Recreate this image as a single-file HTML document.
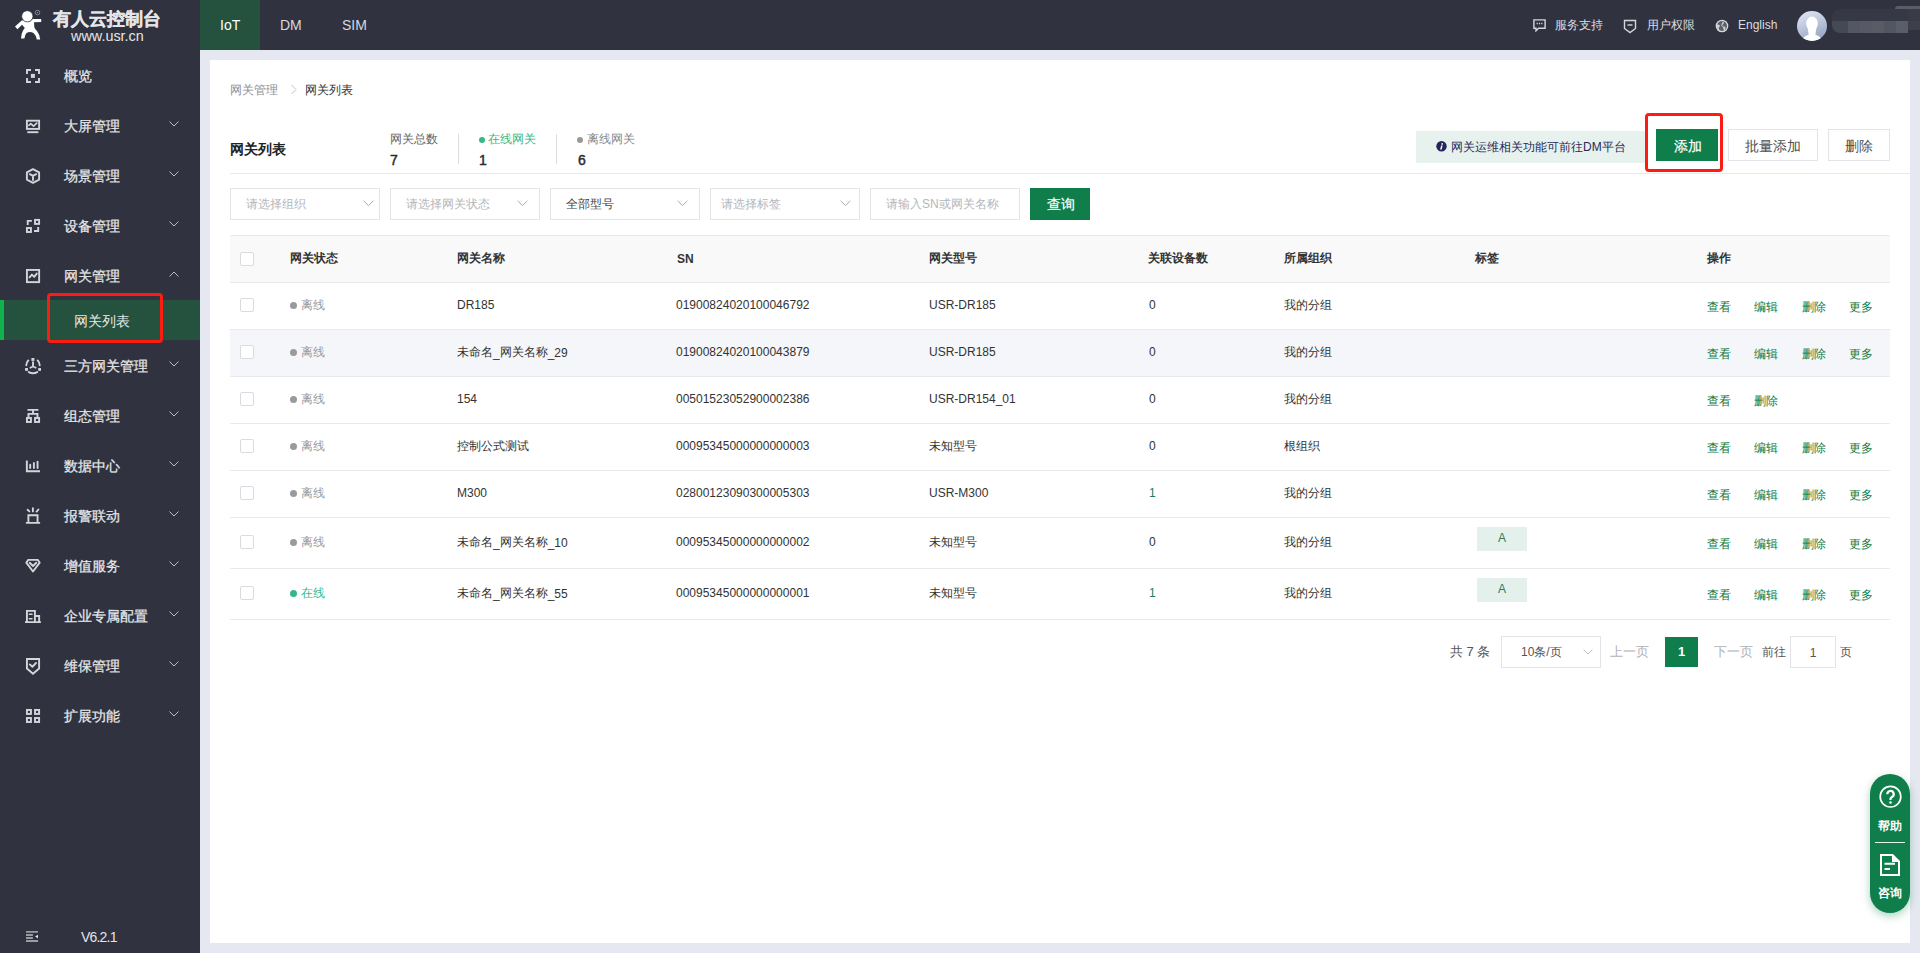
<!DOCTYPE html>
<html><head><meta charset="utf-8">
<style>
*{margin:0;padding:0;box-sizing:border-box}
html,body{width:1920px;height:953px;overflow:hidden;font-family:"Liberation Sans",sans-serif;background:#e5e8f0;color:#333}
.abs{position:absolute}
#top{position:absolute;left:0;top:0;width:1920px;height:50px;background:#30333f;z-index:2}
#side{position:absolute;left:0;top:0;width:200px;height:953px;background:#30333f}
#card{position:absolute;left:210px;top:60px;width:1700px;height:883px;background:#fff}
.logo-t{position:absolute;left:53px;top:7px;font-size:18px;font-weight:bold;color:#e4e5e8;letter-spacing:0;-webkit-text-stroke:0.3px #e4e5e8}
.logo-u{position:absolute;left:71px;top:28px;font-size:14.4px;color:#e6e6e6}
.tab{position:absolute;top:0;height:50px;line-height:50px;font-size:14px;color:#d7d9de}
.mi{position:absolute;left:0;width:200px;height:50px;font-size:14px;color:#e6e7ea;-webkit-text-stroke:0.25px #e6e7ea}
.mi .t{position:absolute;left:64px;top:1px;line-height:50px}
.mi svg.ic{position:absolute;left:24px;top:15px}
.mi .ch{position:absolute;left:169px;top:21px}
.th{font-size:12px;font-weight:bold;color:#333}
.td{font-size:12px;color:#333;white-space:nowrap}
.op{font-size:12px;color:#0c7a42}
.cj{position:relative;top:-1px}
.dot{display:inline-block;width:7px;height:7px;border-radius:50%;vertical-align:1px;margin-right:4px}
.tag{width:50px;height:24px;background:#e4f0eb;color:#2e7d5a;font-size:12px;line-height:23px;text-align:center}
</style></head><body>
<div id="top">
  <svg class="abs" style="left:10px;top:5px" width="40" height="40" viewBox="0 0 40 40"><path fill="#fff" d="M12 15.2 L16 16.8 L20 16.8 L22.8 14 L31.2 14 L31.2 17 L24 17.3 L24.3 22 Q25 24.5 27 26 Q29.8 29.5 30.2 34.6 L26.8 34.6 Q26 30 23.5 28 Q20 25.8 16.5 28 Q15 29.5 14.4 33.5 L11 33.5 Q11.5 28 13 25.5 L14.8 23 L12 19.8 L7.4 24.3 L5 21.5 Z"/><circle cx="17.3" cy="11.3" r="5.6" fill="#fff" stroke="#30333f" stroke-width="0.7"/><circle cx="27.5" cy="7.6" r="2.3" fill="none" stroke="#9a9ca3" stroke-width="0.8"/><circle cx="27.5" cy="7.6" r="0.7" fill="#9a9ca3"/></svg>
  <div class="logo-t">有人云控制台</div>
  <div class="logo-u">www.usr.cn</div>
  <div class="abs" style="left:200px;top:0;width:60px;height:50px;background:#24523e"></div>
  <div class="tab" style="left:220px;color:#fff">IoT</div>
  <div class="tab" style="left:280px">DM</div>
  <div class="tab" style="left:342px">SIM</div>
  <svg class="abs" style="left:1533px;top:19px" width="13" height="13" viewBox="0 0 13 13" fill="none" stroke="#d6d7db" stroke-width="1.4"><path d="M.9 .9h11.2v8.3H5.6L3 11.8V9.2H.9z"/><path d="M3.6 4.6h1.2M5.9 4.6h1.2M8.2 4.6h1.2" stroke-width="1.5"/></svg>
  <div class="abs" style="left:1555px;top:17px;font-size:12px;color:#dcdde0">服务支持</div>
  <svg class="abs" style="left:1623px;top:19px" width="14" height="15" viewBox="0 0 14 15" fill="none" stroke="#d6d7db" stroke-width="1.4"><path d="M1.5 1.5h11v8L7 13.6 1.5 9.5z"/><path d="M4.5 6h5"/></svg>
  <div class="abs" style="left:1647px;top:17px;font-size:12px;color:#dcdde0">用户权限</div>
  <svg class="abs" style="left:1715px;top:19px" width="14" height="14" viewBox="0 0 14 14"><circle cx="7" cy="7" r="6.3" fill="#d6d7db"/><circle cx="7" cy="7" r="5" fill="#5d606b"/><path fill="#d6d7db" d="M2.2 5.5c.8-.3 1.8 0 2.4.7.5.7.2 1.5-.4 1.9-.6.4-.6 1.2-.2 1.8l.6 1.6C3.3 11 2 9.3 2 7.2c0-.6.1-1.2.2-1.7zM7.8 2c.7.5 1.1 1.2 1 2-.1.7-.8 1.1-1.2 1.6-.5.6-.3 1.4.3 1.7.7.3 1.5.1 2.1.6.6.5.6 1.3.3 2l-.8 1.4C8.8 11 8.3 10 8.4 9c.1-.8-.6-1.2-1.2-1.6C6.4 6.9 6.2 6 6.6 5.2 7 4.3 7.9 3.4 7.8 2z"/></svg>
  <div class="abs" style="left:1738px;top:18px;font-size:12px;color:#dcdde0">English</div>
  <svg class="abs" style="left:1797px;top:11px" width="31" height="31" viewBox="0 0 31 31"><defs><linearGradient id="av" x1="0.3" y1="0" x2="0.7" y2="1"><stop offset="0" stop-color="#dde3f2"/><stop offset="1" stop-color="#95a1c2"/></linearGradient><clipPath id="avc"><circle cx="15" cy="15" r="15"/></clipPath></defs><circle cx="15" cy="15" r="15" fill="url(#av)"/><g clip-path="url(#avc)" fill="#fff"><ellipse cx="15" cy="12.5" rx="5.8" ry="7"/><path d="M10.5 16h9l-1.2 8h-6.6z"/><ellipse cx="15" cy="29" rx="9.2" ry="5.8"/></g></svg>
  <div class="abs" style="left:1832px;top:9px;width:88px;height:24px;border-radius:8px 0 0 8px;overflow:hidden;filter:blur(0.6px)"><div class="abs" style="left:0;top:0;width:88px;height:12px;background:#363945"></div><div class="abs" style="left:0;top:12px;width:16px;height:12px;background:#454855"></div><div class="abs" style="left:16px;top:12px;width:12px;height:12px;background:#545763"></div><div class="abs" style="left:28px;top:12px;width:12px;height:12px;background:#575a66"></div><div class="abs" style="left:40px;top:12px;width:12px;height:12px;background:#5b5b66"></div><div class="abs" style="left:52px;top:12px;width:12px;height:12px;background:#535662"></div><div class="abs" style="left:64px;top:12px;width:12px;height:12px;background:#5a5d6a"></div><div class="abs" style="left:76px;top:12px;width:12px;height:9px;background:#3d404b"></div><div class="abs" style="left:76px;top:0;width:12px;height:12px;background:#393c47"></div></div>
  <div class="abs" style="left:1895px;top:6px;width:25px;height:3px;background:#5a5d68;border-radius:3px 0 0 0;filter:blur(0.5px)"></div>

</div>
<div id="side">
<div class="mi" style="top:50px"><svg class="ic" width="20" height="20" viewBox="0 0 20 20" fill="none" stroke="#d3d5db" stroke-width="1.9"><path d="M7 5H3V9M11 5H15V9M3 13V17H7M15 13V17H11"/><rect x="6.9" y="8.9" width="4" height="4" fill="#d3d5db" stroke="none"/></svg><span class="t">概览</span></div>
<div class="mi" style="top:100px"><svg class="ic" width="20" height="20" viewBox="0 0 20 20" fill="none" stroke="#d3d5db" stroke-width="1.9"><rect x="2.9" y="5.7" width="12.2" height="8.2"/><path d="M4.9 10.4L6.8 8.6 9.5 11.2 12.8 8.1" stroke-width="1.6" stroke-linecap="round" stroke-linejoin="round"/><path d="M3.3 17.2H14.4"/></svg><span class="t">大屏管理</span><svg class="ch" width="10" height="6" viewBox="0 0 10 6" fill="none" stroke="#b9bcc6" stroke-width="1"><path d="M.5 .5L5 5 9.5 .5"/></svg></div>
<div class="mi" style="top:150px"><svg class="ic" width="20" height="20" viewBox="0 0 20 20" fill="none" stroke="#d3d5db" stroke-width="1.9"><path d="M9 4.1L15.1 7.4V14.6L9 17.9 2.9 14.6V7.4z" stroke-linejoin="round"/><path d="M5.8 9.2L9 10.8 12.2 9.2M9 10.8V15" stroke-linecap="round" stroke-linejoin="round"/></svg><span class="t">场景管理</span><svg class="ch" width="10" height="6" viewBox="0 0 10 6" fill="none" stroke="#b9bcc6" stroke-width="1"><path d="M.5 .5L5 5 9.5 .5"/></svg></div>
<div class="mi" style="top:200px"><svg class="ic" width="20" height="20" viewBox="0 0 20 20" fill="none" stroke="#d3d5db" stroke-width="1.9"><path d="M7.9 5.85H3.73V10M14.2 12V16.05H10"/><rect x="11" y="4.9" width="4.1" height="4"/><rect x="2.93" y="13" width="4" height="4"/></svg><span class="t">设备管理</span><svg class="ch" width="10" height="6" viewBox="0 0 10 6" fill="none" stroke="#b9bcc6" stroke-width="1"><path d="M.5 .5L5 5 9.5 .5"/></svg></div>
<div class="mi" style="top:250px"><svg class="ic" width="20" height="20" viewBox="0 0 20 20" fill="none" stroke="#d3d5db" stroke-width="1.9"><rect x="2.93" y="4.93" width="12.2" height="12.2"/><path d="M5.5 12.3L7.9 9.6 10.2 11.9 12.7 8.6" stroke-linecap="round" stroke-linejoin="round"/></svg><span class="t">网关管理</span><svg class="ch" width="10" height="6" viewBox="0 0 10 6" fill="none" stroke="#b9bcc6" stroke-width="1"><path d="M.5 5.5L5 1 9.5 5.5"/></svg></div>
<div class="mi" style="top:340px"><svg class="ic" width="20" height="20" viewBox="0 0 20 20" fill="none" stroke="#d3d5db" stroke-width="1.9"><rect x="7.4" y="3" width="3" height="2.9" fill="#d3d5db" stroke="none"/><path d="M9 6.6V11.5M9 11.5L5.7 13M9 11.5L12.3 13"/><path d="M4.3 5.4A7.3 7.3 0 0 0 2.3 10.3M13.7 5.4A7.3 7.3 0 0 1 15.7 10.3M4.8 17.1Q9 19.3 13.2 17.1" stroke-linecap="round"/><rect x="1.1" y="13" width="2.8" height="2.9" fill="#d3d5db" stroke="none"/><rect x="14.2" y="13" width="2.8" height="2.9" fill="#d3d5db" stroke="none"/></svg><span class="t">三方网关管理</span><svg class="ch" width="10" height="6" viewBox="0 0 10 6" fill="none" stroke="#b9bcc6" stroke-width="1"><path d="M.5 .5L5 5 9.5 .5"/></svg></div>
<div class="mi" style="top:390px"><svg class="ic" width="20" height="20" viewBox="0 0 20 20" fill="none" stroke="#d3d5db" stroke-width="1.9"><path d="M3.5 4.85H14.4M9 5.8V8.9M4.45 12V8.9H13.45V12"/><rect x="2.93" y="13" width="4" height="4"/><rect x="11" y="13" width="4.1" height="4"/></svg><span class="t">组态管理</span><svg class="ch" width="10" height="6" viewBox="0 0 10 6" fill="none" stroke="#b9bcc6" stroke-width="1"><path d="M.5 .5L5 5 9.5 .5"/></svg></div>
<div class="mi" style="top:440px"><svg class="ic" width="20" height="20" viewBox="0 0 20 20" fill="none" stroke="#d3d5db" stroke-width="1.9"><path d="M2.85 5.5V16.25H16"/><path d="M6.2 9.7V13M9.9 8V13M13.55 6.6V13" stroke-linecap="round"/></svg><span class="t">数据中心</span><svg class="ch" width="10" height="6" viewBox="0 0 10 6" fill="none" stroke="#b9bcc6" stroke-width="1"><path d="M.5 .5L5 5 9.5 .5"/></svg></div>
<div class="mi" style="top:490px"><svg class="ic" width="20" height="20" viewBox="0 0 20 20" fill="none" stroke="#d3d5db" stroke-width="1.9"><path d="M4.4 17.9V10.2H13.55V17.9M1.9 17.9H16.1"/><path d="M3.6 4.8L5.3 6.4M8.9 3.2V6.4M14.4 4.5L12.6 6.6" stroke-linecap="round"/></svg><span class="t">报警联动</span><svg class="ch" width="10" height="6" viewBox="0 0 10 6" fill="none" stroke="#b9bcc6" stroke-width="1"><path d="M.5 .5L5 5 9.5 .5"/></svg></div>
<div class="mi" style="top:540px"><svg class="ic" width="20" height="20" viewBox="0 0 20 20" fill="none" stroke="#d3d5db" stroke-width="1.9"><path d="M4.1 4.9H13.9L15.7 7.7 9 16.5 2.3 7.7z" stroke-linejoin="round"/><path d="M5.7 7.8L9 11 12.3 7.8" stroke-linecap="round" stroke-linejoin="round"/></svg><span class="t">增值服务</span><svg class="ch" width="10" height="6" viewBox="0 0 10 6" fill="none" stroke="#b9bcc6" stroke-width="1"><path d="M.5 .5L5 5 9.5 .5"/></svg></div>
<div class="mi" style="top:590px"><svg class="ic" width="20" height="20" viewBox="0 0 20 20" fill="none" stroke="#d3d5db" stroke-width="1.9"><path d="M2.93 17V5.85H10.9V17M10.9 10.95H15.15V17M1 17.1H16.9"/><path d="M5.4 9.2H8M5.4 13.7H8" stroke-width="1.5" stroke-linecap="round"/></svg><span class="t">企业专属配置</span><svg class="ch" width="10" height="6" viewBox="0 0 10 6" fill="none" stroke="#b9bcc6" stroke-width="1"><path d="M.5 .5L5 5 9.5 .5"/></svg></div>
<div class="mi" style="top:640px"><svg class="ic" width="20" height="20" viewBox="0 0 20 20" fill="none" stroke="#d3d5db" stroke-width="1.9"><path d="M2.93 4H15.1V13.6L9 18.7 2.93 13.6z"/><path d="M5.8 9.4L8.4 11.8 12 8" stroke-linecap="round" stroke-linejoin="round"/></svg><span class="t">维保管理</span><svg class="ch" width="10" height="6" viewBox="0 0 10 6" fill="none" stroke="#b9bcc6" stroke-width="1"><path d="M.5 .5L5 5 9.5 .5"/></svg></div>
<div class="mi" style="top:690px"><svg class="ic" width="20" height="20" viewBox="0 0 20 20" fill="none" stroke="#d3d5db" stroke-width="1.9"><rect x="2.93" y="4.93" width="4" height="4"/><rect x="11" y="4.93" width="4.1" height="4"/><rect x="2.93" y="13" width="4" height="4"/><rect x="11" y="13" width="4.1" height="4"/></svg><span class="t">扩展功能</span><svg class="ch" width="10" height="6" viewBox="0 0 10 6" fill="none" stroke="#b9bcc6" stroke-width="1"><path d="M.5 .5L5 5 9.5 .5"/></svg></div>
<div class="abs" style="left:0;top:300px;width:200px;height:40px;background:#24523e"></div>
<div class="abs" style="left:0;top:300px;width:4px;height:40px;background:#12b24f"></div>
<div class="abs" style="left:74px;top:301px;line-height:40px;font-size:14px;color:#e8e9eb">网关列表</div>
<div class="abs" style="left:47px;top:293px;width:116px;height:50px;border:3px solid #fc1d12;border-radius:4px"></div>
<svg class="abs" style="left:20px;top:925px" width="24" height="22" viewBox="0 0 24 22"><path d="M6 6.9H18M6 10H12.9M6 13H12.9M6 16H18" stroke="#9a9ca3" stroke-width="1.8"/><path d="M18 9.7V13.2L15 11.5z" fill="#e2e2e4"/></svg>
<div class="abs" style="left:81px;top:929px;font-size:14px;letter-spacing:-0.8px;color:#e4e5e9">V6.2.1</div>
</div>
<div id="card">
</div>
<div class="abs" style="left:230px;top:82px;font-size:12px;color:#8c8f96">网关管理</div>
<svg class="abs" style="left:290px;top:84px" width="8" height="11" viewBox="0 0 8 11" fill="none" stroke="#c3c5ca" stroke-width="1"><path d="M1.5 1l4.5 4.5L1.5 10"/></svg>
<div class="abs" style="left:305px;top:82px;font-size:12px;color:#333">网关列表</div>

<div class="abs" style="left:230px;top:141px;font-size:14px;font-weight:700;color:#222">网关列表</div>
<div class="abs" style="left:390px;top:131px;font-size:12px;color:#666">网关总数</div>
<div class="abs" style="left:390px;top:152px;font-size:14px;font-weight:normal;-webkit-text-stroke:0.45px #2a2a2a;color:#2a2a2a">7</div>
<div class="abs" style="left:458px;top:134px;width:1px;height:30px;background:#dcdde2"></div>
<div class="abs" style="left:479px;top:131px;font-size:12px;color:#35b885"><span style="display:inline-block;width:6px;height:6px;border-radius:50%;background:#35b885;vertical-align:0px;margin-right:3px"></span>在线网关</div>
<div class="abs" style="left:479px;top:152px;font-size:14px;font-weight:normal;-webkit-text-stroke:0.45px #2a2a2a;color:#2a2a2a">1</div>
<div class="abs" style="left:556px;top:134px;width:1px;height:30px;background:#dcdde2"></div>
<div class="abs" style="left:577px;top:131px;font-size:12px;color:#888"><span style="display:inline-block;width:6px;height:6px;border-radius:50%;background:#999;vertical-align:0px;margin-right:4px"></span>离线网关</div>
<div class="abs" style="left:578px;top:152px;font-size:14px;font-weight:normal;-webkit-text-stroke:0.45px #2a2a2a;color:#2a2a2a">6</div>

<div class="abs" style="left:1416px;top:131px;width:230px;height:32px;background:#e7f1ee"></div>
<svg class="abs" style="left:1436px;top:141px" width="11" height="11" viewBox="0 0 11 11"><circle cx="5.5" cy="5.3" r="5.2" fill="#23265a"/><path d="M5.1 4.4h1.5L5.6 8.6H4.1z" fill="#fff"/><circle cx="6.2" cy="2.9" r=".85" fill="#fff"/></svg>
<div class="abs" style="left:1451px;top:139px;font-size:12px;color:#272a55">网关运维相关功能可前往DM平台</div>
<div class="abs" style="left:1656px;top:129px;width:62px;height:32px;background:#0f7e4b;color:#fff;font-size:14px;line-height:35px;text-align:center;padding-left:1px;-webkit-text-stroke:0.2px #fff">添加</div>
<div class="abs" style="left:1645px;top:113px;width:78px;height:59px;border:3px solid #fc1d12;border-radius:4px"></div>
<div class="abs" style="left:1728px;top:129px;width:90px;height:32px;border:1px solid #e2e4ea;color:#505050;font-size:14px;line-height:33px;text-align:center">批量添加</div>
<div class="abs" style="left:1828px;top:129px;width:62px;height:32px;border:1px solid #e2e4ea;color:#505050;font-size:14px;line-height:33px;text-align:center">删除</div>
<div class="abs" style="left:230px;top:173px;width:1680px;height:1px;background:#e8eaef"></div>
<div class="abs" style="left:230px;top:188px;width:150px;height:32px;border:1px solid #e2e4ea;font-size:12px;line-height:30px;padding-left:15px;color:#b4b6bb">请选择组织</div><svg class="abs" style="left:363px;top:200px" width="11" height="7" viewBox="0 0 11 7" fill="none" stroke="#a6a8ae" stroke-width="1"><path d="M.6 .8L5.5 5.6 10.4 .8"/></svg><div class="abs" style="left:390px;top:188px;width:150px;height:32px;border:1px solid #e2e4ea;font-size:12px;line-height:30px;padding-left:15px;color:#b4b6bb">请选择网关状态</div><svg class="abs" style="left:517px;top:200px" width="11" height="7" viewBox="0 0 11 7" fill="none" stroke="#a6a8ae" stroke-width="1"><path d="M.6 .8L5.5 5.6 10.4 .8"/></svg><div class="abs" style="left:550px;top:188px;width:150px;height:32px;border:1px solid #e2e4ea;font-size:12px;line-height:30px;padding-left:15px;color:#444">全部型号</div><svg class="abs" style="left:677px;top:200px" width="11" height="7" viewBox="0 0 11 7" fill="none" stroke="#a6a8ae" stroke-width="1"><path d="M.6 .8L5.5 5.6 10.4 .8"/></svg><div class="abs" style="left:710px;top:188px;width:150px;height:32px;border:1px solid #e2e4ea;font-size:12px;line-height:30px;padding-left:10px;color:#b4b6bb">请选择标签</div><svg class="abs" style="left:840px;top:200px" width="11" height="7" viewBox="0 0 11 7" fill="none" stroke="#a6a8ae" stroke-width="1"><path d="M.6 .8L5.5 5.6 10.4 .8"/></svg><div class="abs" style="left:870px;top:188px;width:150px;height:32px;border:1px solid #e2e4ea;font-size:12px;line-height:30px;padding-left:15px;color:#b4b6bb">请输入SN或网关名称</div><div class="abs" style="left:1030px;top:188px;width:60px;height:32px;background:#0f7e4b;color:#fff;font-size:14px;line-height:33px;text-align:center;padding-left:1px;-webkit-text-stroke:0.2px #fff">查询</div>
<div class="abs" style="left:230px;top:235px;width:1660px;height:1px;background:#e8eaf0"></div>
<div class="abs" style="left:230px;top:236px;width:1660px;height:46px;background:#f9f9fa"></div><div class="abs" style="left:230px;top:282px;width:1660px;height:1px;background:#e8eaf0"></div>
<div class="abs" style="left:240px;top:252px;width:14px;height:14px;border:1px solid #d9dbe1;border-radius:2px;background:#fff"></div>
<div class="abs th" style="left:290px;top:250px">网关状态</div>
<div class="abs th" style="left:457px;top:250px">网关名称</div>
<div class="abs th" style="left:677px;top:252px">SN</div>
<div class="abs th" style="left:929px;top:250px">网关型号</div>
<div class="abs th" style="left:1148px;top:250px">关联设备数</div>
<div class="abs th" style="left:1284px;top:250px">所属组织</div>
<div class="abs th" style="left:1475px;top:250px">标签</div>
<div class="abs th" style="left:1707px;top:250px">操作</div>
<div class="abs" style="left:230px;top:329px;width:1660px;height:1px;background:#e8eaf0"></div>
<div class="abs" style="left:240px;top:298px;width:14px;height:14px;border:1px solid #d9dbe1;border-radius:2px;background:#fff"></div>
<div class="abs td" style="left:290px;top:298px;color:#999"><span class="dot" style="background:#9a9a9a"></span><span class="cj">离线</span></div>
<div class="abs td" style="left:457px;top:298px">DR185</div>
<div class="abs td" style="left:676px;top:298px">01900824020100046792</div>
<div class="abs td" style="left:929px;top:298px">USR-DR185</div>
<div class="abs td" style="left:1149px;top:298px;color:#333">0</div>
<div class="abs td" style="left:1284px;top:298px"><span class="cj">我的分组</span></div>
<div class="abs op" style="left:1707.0px;top:300px"><span class="cj">查看</span></div>
<div class="abs op" style="left:1754px;top:300px"><span class="cj">编辑</span></div>
<div class="abs op" style="left:1802px;top:300px"><span class="cj">删除</span></div>
<div class="abs op" style="left:1849px;top:300px"><span class="cj">更多</span></div>
<div class="abs" style="left:230px;top:330px;width:1660px;height:46px;background:#f5f6f9"></div>
<div class="abs" style="left:230px;top:376px;width:1660px;height:1px;background:#e8eaf0"></div>
<div class="abs" style="left:240px;top:345px;width:14px;height:14px;border:1px solid #d9dbe1;border-radius:2px;background:#fff"></div>
<div class="abs td" style="left:290px;top:345px;color:#999"><span class="dot" style="background:#9a9a9a"></span><span class="cj">离线</span></div>
<div class="abs td" style="left:457px;top:345px"><span class="cj">未命名</span>_<span class="cj">网关名称</span>_29</div>
<div class="abs td" style="left:676px;top:345px">01900824020100043879</div>
<div class="abs td" style="left:929px;top:345px">USR-DR185</div>
<div class="abs td" style="left:1149px;top:345px;color:#333">0</div>
<div class="abs td" style="left:1284px;top:345px"><span class="cj">我的分组</span></div>
<div class="abs op" style="left:1707.0px;top:347px"><span class="cj">查看</span></div>
<div class="abs op" style="left:1754px;top:347px"><span class="cj">编辑</span></div>
<div class="abs op" style="left:1802px;top:347px"><span class="cj">删除</span></div>
<div class="abs op" style="left:1849px;top:347px"><span class="cj">更多</span></div>
<div class="abs" style="left:230px;top:423px;width:1660px;height:1px;background:#e8eaf0"></div>
<div class="abs" style="left:240px;top:392px;width:14px;height:14px;border:1px solid #d9dbe1;border-radius:2px;background:#fff"></div>
<div class="abs td" style="left:290px;top:392px;color:#999"><span class="dot" style="background:#9a9a9a"></span><span class="cj">离线</span></div>
<div class="abs td" style="left:457px;top:392px">154</div>
<div class="abs td" style="left:676px;top:392px">00501523052900002386</div>
<div class="abs td" style="left:929px;top:392px">USR-DR154_01</div>
<div class="abs td" style="left:1149px;top:392px;color:#333">0</div>
<div class="abs td" style="left:1284px;top:392px"><span class="cj">我的分组</span></div>
<div class="abs op" style="left:1707.0px;top:394px"><span class="cj">查看</span></div>
<div class="abs op" style="left:1754px;top:394px"><span class="cj">删除</span></div>
<div class="abs" style="left:230px;top:470px;width:1660px;height:1px;background:#e8eaf0"></div>
<div class="abs" style="left:240px;top:439px;width:14px;height:14px;border:1px solid #d9dbe1;border-radius:2px;background:#fff"></div>
<div class="abs td" style="left:290px;top:439px;color:#999"><span class="dot" style="background:#9a9a9a"></span><span class="cj">离线</span></div>
<div class="abs td" style="left:457px;top:439px"><span class="cj">控制公式测试</span></div>
<div class="abs td" style="left:676px;top:439px">00095345000000000003</div>
<div class="abs td" style="left:929px;top:439px"><span class="cj">未知型号</span></div>
<div class="abs td" style="left:1149px;top:439px;color:#333">0</div>
<div class="abs td" style="left:1284px;top:439px"><span class="cj">根组织</span></div>
<div class="abs op" style="left:1707.0px;top:441px"><span class="cj">查看</span></div>
<div class="abs op" style="left:1754px;top:441px"><span class="cj">编辑</span></div>
<div class="abs op" style="left:1802px;top:441px"><span class="cj">删除</span></div>
<div class="abs op" style="left:1849px;top:441px"><span class="cj">更多</span></div>
<div class="abs" style="left:230px;top:517px;width:1660px;height:1px;background:#e8eaf0"></div>
<div class="abs" style="left:240px;top:486px;width:14px;height:14px;border:1px solid #d9dbe1;border-radius:2px;background:#fff"></div>
<div class="abs td" style="left:290px;top:486px;color:#999"><span class="dot" style="background:#9a9a9a"></span><span class="cj">离线</span></div>
<div class="abs td" style="left:457px;top:486px">M300</div>
<div class="abs td" style="left:676px;top:486px">02800123090300005303</div>
<div class="abs td" style="left:929px;top:486px">USR-M300</div>
<div class="abs td" style="left:1149px;top:486px;color:#1a7f4f">1</div>
<div class="abs td" style="left:1284px;top:486px"><span class="cj">我的分组</span></div>
<div class="abs op" style="left:1707.0px;top:488px"><span class="cj">查看</span></div>
<div class="abs op" style="left:1754px;top:488px"><span class="cj">编辑</span></div>
<div class="abs op" style="left:1802px;top:488px"><span class="cj">删除</span></div>
<div class="abs op" style="left:1849px;top:488px"><span class="cj">更多</span></div>
<div class="abs" style="left:230px;top:568px;width:1660px;height:1px;background:#e8eaf0"></div>
<div class="abs" style="left:240px;top:535px;width:14px;height:14px;border:1px solid #d9dbe1;border-radius:2px;background:#fff"></div>
<div class="abs td" style="left:290px;top:535px;color:#999"><span class="dot" style="background:#9a9a9a"></span><span class="cj">离线</span></div>
<div class="abs td" style="left:457px;top:535px"><span class="cj">未命名</span>_<span class="cj">网关名称</span>_10</div>
<div class="abs td" style="left:676px;top:535px">00095345000000000002</div>
<div class="abs td" style="left:929px;top:535px"><span class="cj">未知型号</span></div>
<div class="abs td" style="left:1149px;top:535px;color:#333">0</div>
<div class="abs td" style="left:1284px;top:535px"><span class="cj">我的分组</span></div>
<div class="abs tag" style="left:1477px;top:527px">A</div>
<div class="abs op" style="left:1707.0px;top:537px"><span class="cj">查看</span></div>
<div class="abs op" style="left:1754px;top:537px"><span class="cj">编辑</span></div>
<div class="abs op" style="left:1802px;top:537px"><span class="cj">删除</span></div>
<div class="abs op" style="left:1849px;top:537px"><span class="cj">更多</span></div>
<div class="abs" style="left:230px;top:619px;width:1660px;height:1px;background:#e8eaf0"></div>
<div class="abs" style="left:240px;top:586px;width:14px;height:14px;border:1px solid #d9dbe1;border-radius:2px;background:#fff"></div>
<div class="abs td" style="left:290px;top:586px;color:#35b885"><span class="dot" style="background:#35b885"></span><span class="cj">在线</span></div>
<div class="abs td" style="left:457px;top:586px"><span class="cj">未命名</span>_<span class="cj">网关名称</span>_55</div>
<div class="abs td" style="left:676px;top:586px">00095345000000000001</div>
<div class="abs td" style="left:929px;top:586px"><span class="cj">未知型号</span></div>
<div class="abs td" style="left:1149px;top:586px;color:#1a7f4f">1</div>
<div class="abs td" style="left:1284px;top:586px"><span class="cj">我的分组</span></div>
<div class="abs tag" style="left:1477px;top:578px">A</div>
<div class="abs op" style="left:1707.0px;top:588px"><span class="cj">查看</span></div>
<div class="abs op" style="left:1754px;top:588px"><span class="cj">编辑</span></div>
<div class="abs op" style="left:1802px;top:588px"><span class="cj">删除</span></div>
<div class="abs op" style="left:1849px;top:588px"><span class="cj">更多</span></div>
<div class="abs" style="left:1450px;top:643px;font-size:13px;color:#555">共 7 条</div>
<div class="abs" style="left:1501px;top:636px;width:100px;height:32px;border:1px solid #e2e4ea;font-size:12px;line-height:30px;padding-left:19px;color:#555">10条/页</div>
<svg class="abs" style="left:1583px;top:649px" width="10" height="6" viewBox="0 0 10 6" fill="none" stroke="#b9bbc0" stroke-width="1"><path d="M.6 .6L5 5 9.4 .6"/></svg>
<div class="abs" style="left:1610px;top:643px;font-size:13px;color:#b0b2b6">上一页</div>
<div class="abs" style="left:1665px;top:637px;width:33px;height:30px;background:#0f7e4b;color:#fff;font-size:13px;font-weight:bold;line-height:30px;text-align:center">1</div>
<div class="abs" style="left:1714px;top:643px;font-size:13px;color:#b0b2b6">下一页</div>
<div class="abs" style="left:1762px;top:644px;font-size:12px;color:#555">前往</div>
<div class="abs" style="left:1790px;top:636px;width:46px;height:32px;border:1px solid #e2e4ea;font-size:12px;line-height:32px;text-align:center;color:#555">1</div>
<div class="abs" style="left:1840px;top:644px;font-size:12px;color:#555">页</div>

<div class="abs" style="left:1870px;top:774px;width:40px;height:139px;border-radius:20px;background:#0f7e4b;box-shadow:0 3px 8px rgba(15,126,75,.35)"></div>
<svg class="abs" style="left:1879px;top:785px" width="24" height="24" viewBox="0 0 24 24" fill="none" stroke="#fff" stroke-width="1.7"><circle cx="11.5" cy="11.7" r="10.3"/><path d="M8.3 9.2a3.2 3.2 0 1 1 4.7 2.8c-.9.5-1.5 1.1-1.5 2.1v.9" stroke-width="2.2"/><circle cx="11.5" cy="17.4" r="1.25" fill="#fff" stroke="none"/></svg>
<div class="abs" style="left:1870px;top:818px;width:40px;text-align:center;font-size:12px;color:#fff;font-weight:bold">帮助</div>
<div class="abs" style="left:1875px;top:842px;width:30px;height:1px;background:#e6f2ec"></div>
<svg class="abs" style="left:1879px;top:853px" width="22" height="24" viewBox="0 0 22 24" fill="none" stroke="#fff" stroke-width="2"><path d="M2 2h11.5L20 8.5V22H2z"/><path d="M13 1.5V9H20.5z" fill="#fff" stroke="none"/><path d="M5.5 10.8H16M5.5 16H11"/></svg>
<div class="abs" style="left:1870px;top:885px;width:40px;text-align:center;font-size:12px;color:#fff;font-weight:bold">咨询</div>

</body></html>
